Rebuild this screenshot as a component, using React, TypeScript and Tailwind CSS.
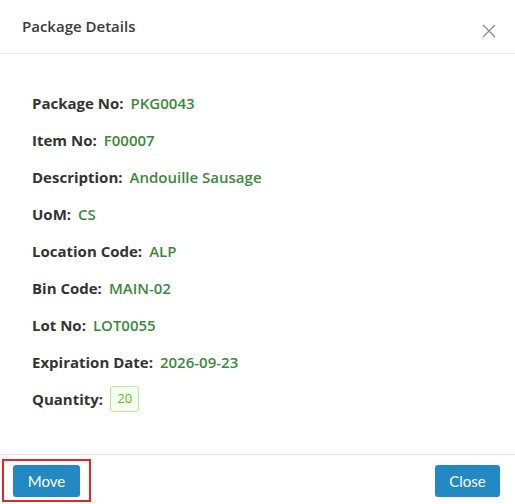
import React from "react";

const rows: [string, string][] = [
  ["Package No:", "PKG0043"],
  ["Item No:", "F00007"],
  ["Description:", "Andouille Sausage"],
  ["UoM:", "CS"],
  ["Location Code:", "ALP"],
  ["Bin Code:", "MAIN-02"],
  ["Lot No:", "LOT0055"],
  ["Expiration Date:", "2026-09-23"],
];

export default function App() {
  return (
    <div className="w-[515px] h-[504px] bg-white flex flex-col font-['Open_Sans','Noto_Sans',sans-serif] text-[#333]">
      <div className="h-[54px] shrink-0 border-b border-[#e8e8e8] flex items-center justify-between pl-[22px] pr-[19px]">
        <h2 className="text-[15px] font-semibold text-[#3a3a3a] -mt-[1px]">Package Details</h2>
        <svg width="14" height="14" viewBox="0 0 14 14" className="mt-[9px]">
          <path d="M1 1 L13 13 M13 1 L1 13" stroke="#8c8c8c" strokeWidth="1.3" fill="none" />
        </svg>
      </div>

      <div className="flex-1 pl-[32px] pt-[37px] flex flex-col gap-[13px]">
        {rows.map(([label, value]) => (
          <div key={label} className="h-[24px] flex items-center gap-[7px] text-[15px]">
            <span className="font-bold text-[#333]">{label}</span>
            <span className="font-semibold text-[#3b8a3b]">{value}</span>
          </div>
        ))}
        <div className="h-[24px] flex items-center gap-[7px] text-[15px]">
          <span className="font-bold text-[#333]">Quantity:</span>
          <span className="h-[26px] w-[29px] flex items-center justify-center rounded-[3px] border border-[#b7eb8f] bg-[#f6ffed] text-[13px] text-[#52c41a]">
            20
          </span>
        </div>
      </div>

      <div className="h-[50px] shrink-0 border-t border-[#e8e8e8] flex items-start justify-between pl-[2px] pr-[15px] pt-[4px] font-['Lato',sans-serif]">
        <div className="border-2 border-[#e8242b] px-[9px] pt-[4px] pb-[3px]">
          <button className="block w-[67px] h-[32px] rounded-[3px] bg-[#2389c3] text-white text-[15px]">
            Move
          </button>
        </div>
        <button className="mt-[6px] w-[65px] h-[32px] rounded-[3px] bg-[#2389c3] text-white text-[15px]">
          Close
        </button>
      </div>
    </div>
  );
}
